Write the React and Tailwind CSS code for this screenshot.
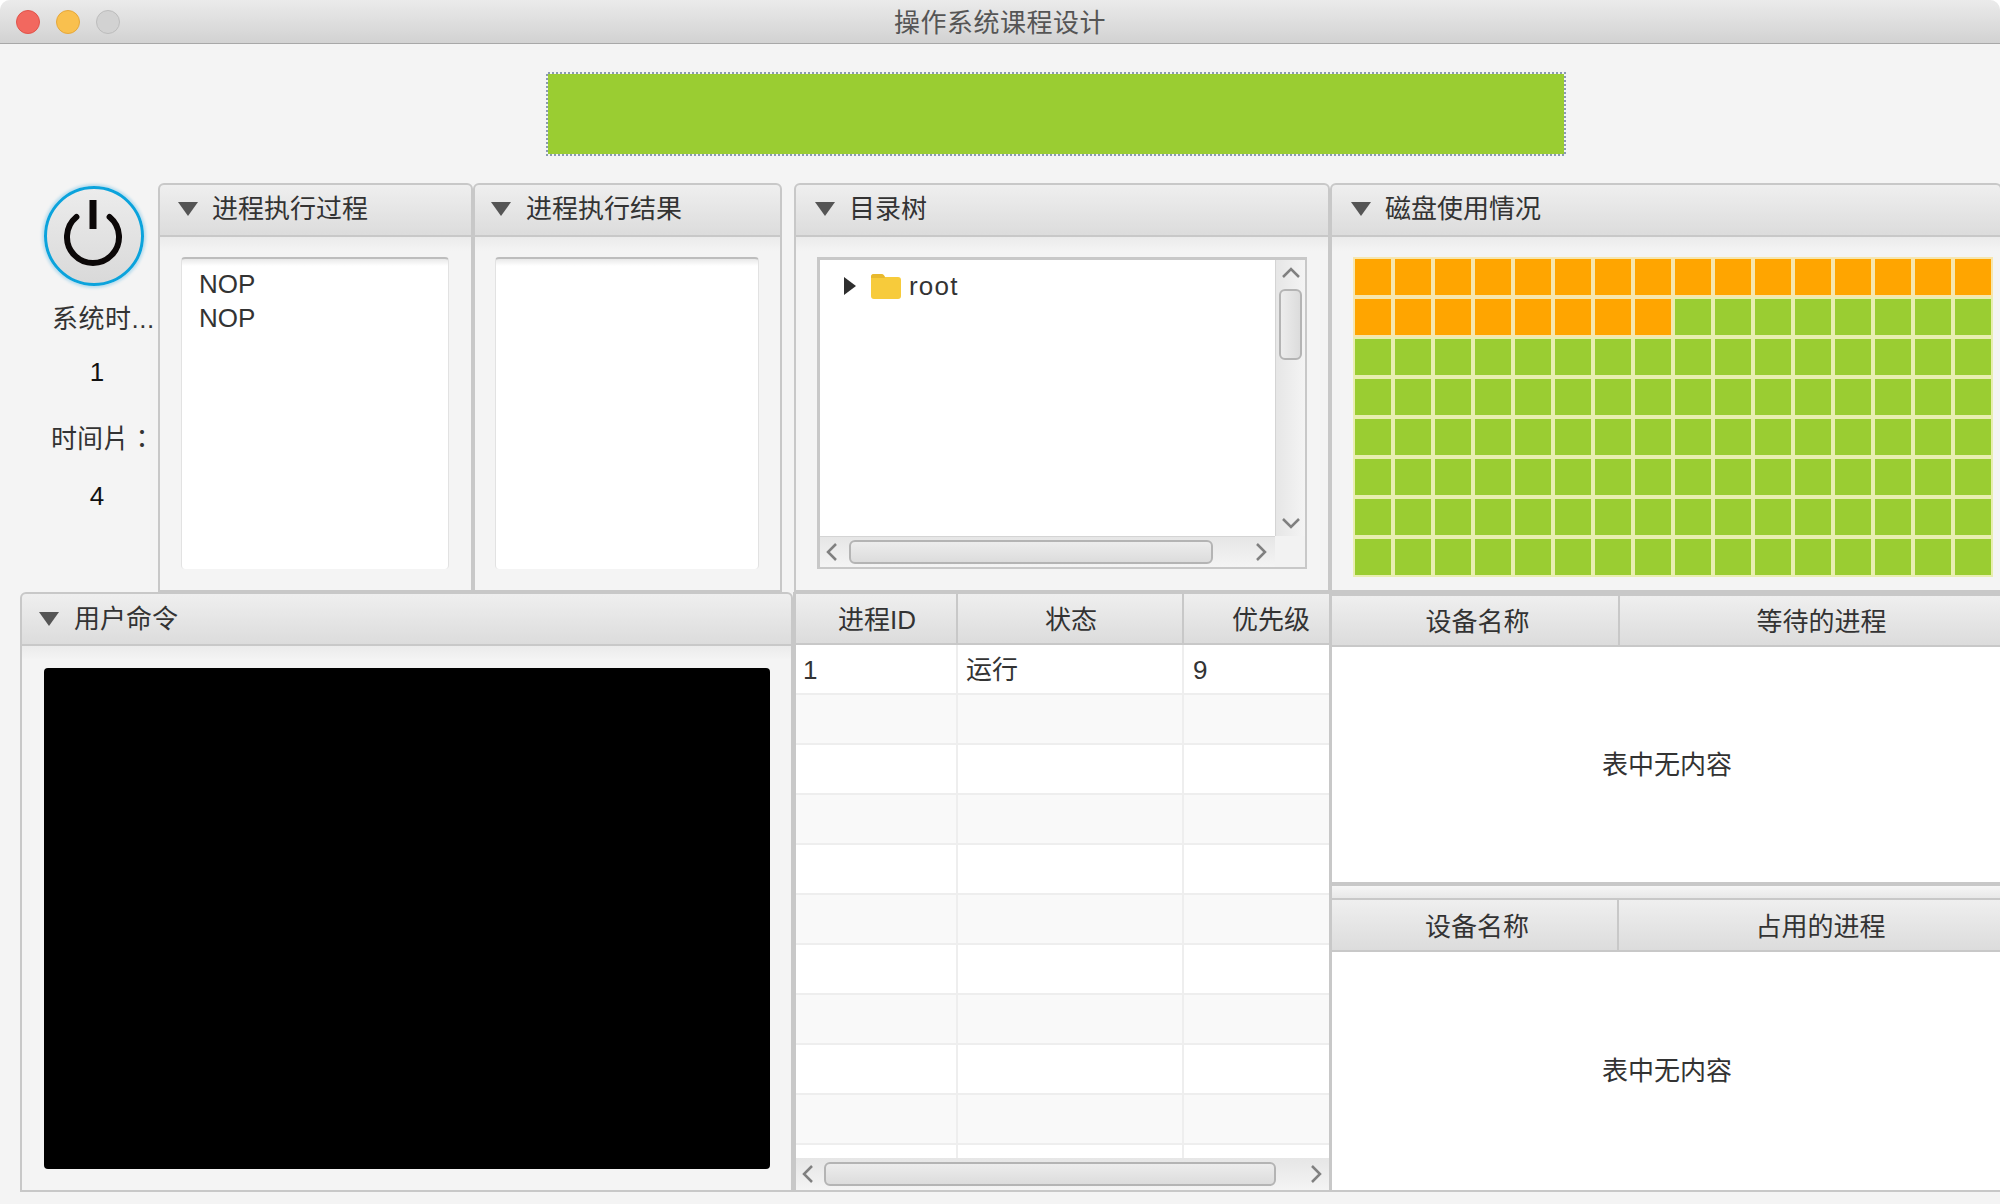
import React from "react";

const headerBg = "bg-linear-to-b from-[#efefef] to-[#dcdcdc]";
const lineColor = "border-[#c8c8c8]";

const PaneTriangle = () => (
  <svg width="20" height="16" viewBox="0 0 20 16" className="shrink-0">
    <path d="M0 1 H20 L10 15 Z" fill="#555555" />
  </svg>
);

const TitledPane = ({ title, className, headerPad = "pl-[16px] gap-[15px] pb-[2px]", children }) => (
  <div className={`flex flex-col shrink-0 ${className}`}>
    <div className={`h-[54px] shrink-0 flex items-center border-2 rounded-t-[6px] ${lineColor} ${headerBg} ${headerPad}`}>
      <PaneTriangle />
      <span className="text-[26px] leading-none text-[#333333] whitespace-nowrap">{title}</span>
    </div>
    <div className={`flex-1 min-h-0 flex border-x-2 border-b-2 ${lineColor} bg-[linear-gradient(#ebebeb,#f4f4f4_14px)] pt-[20px] pb-[21px] px-[21px]`}>
      {children}
    </div>
  </div>
);

const ListBox = ({ items = [], className = "" }) => (
  <div className={`flex-1 rounded-[4px] border-x border-[#e2e2e2] border-t-2 border-t-[#bdbdbd] bg-[linear-gradient(#e9e9e9,#ffffff_7px)] pt-[8px] pl-[17px] ${className}`}>
    {items.map((item, i) => (
      <div key={i} className="h-[34px] flex items-center text-[26px] text-[#333333]">{item}</div>
    ))}
  </div>
);

const Chevron = ({ dir }) => {
  const paths = {
    up: "M2 11 L10 3 L18 11",
    down: "M2 3 L10 11 L18 3",
    left: "M11 2 L3 10 L11 18",
    right: "M3 2 L11 10 L3 18",
  };
  const vertical = dir === "up" || dir === "down";
  return (
    <svg width={vertical ? 20 : 14} height={vertical ? 14 : 20} viewBox={vertical ? "0 0 20 14" : "0 0 14 20"} className="shrink-0">
      <path d={paths[dir]} fill="none" stroke="#808080" strokeWidth="2.5" />
    </svg>
  );
};

const HScrollBar = ({ trackPad, thumbClass }) => (
  <div className={`h-full flex items-center bg-linear-to-b from-[#e6e6e6] to-[#f4f4f4] ${trackPad}`}>
    <Chevron dir="left" />
    <div className={`h-[24px] rounded-[6px] border-2 border-[#b4b4b4] bg-linear-to-b from-[#ededed] to-[#dcdcdc] ${thumbClass}`} />
    <div className="flex-1" />
    <Chevron dir="right" />
  </div>
);

const TreeView = () => (
  <div className={`flex-1 flex flex-col border-t-[3px] border-l-[3px] border-r-2 border-b-2 ${lineColor} bg-[#f2f2f2]`}>
    <div className="flex-1 min-h-0 flex">
      <div className="flex-1 bg-white pt-[13px] pl-[24px]">
        <div className="flex items-center h-[26px]">
          <svg width="12" height="18" viewBox="0 0 12 18"><path d="M0 0 L12 9 L0 18 Z" fill="#2e2e2e" /></svg>
          <svg width="30" height="25" viewBox="0 0 30 25" className="ml-[15px]">
            <path d="M0 3 Q0 0 3 0 H10 Q13 0 14 3 H27 Q30 3 30 6 V22 Q30 25 27 25 H3 Q0 25 0 22 Z" fill="#f7cb3b" />
            <path d="M0 3 Q0 0 3 0 H10 Q13 0 14 4 H0 Z" fill="#e8b92e" />
          </svg>
          <span className="ml-[8px] text-[26px] tracking-[1.2px] text-[#333333]">root</span>
        </div>
      </div>
      <div className="w-[30px] flex flex-col items-center bg-linear-to-r from-[#e6e6e6] to-[#f4f4f4] border-l border-[#d4d4d4] pt-[6px] pb-[6px]">
        <Chevron dir="up" />
        <div className="mt-[9px] w-[23px] h-[71px] rounded-[6px] border-2 border-[#b4b4b4] bg-linear-to-r from-[#ededed] to-[#dcdcdc]" />
        <div className="flex-1" />
        <Chevron dir="down" />
      </div>
    </div>
    <div className="h-[31px] shrink-0 flex">
      <div className="flex-1 border-t border-[#d4d4d4]">
        <HScrollBar trackPad="pl-[5px] pr-[7px]" thumbClass="ml-[10px] w-[364px]" />
      </div>
      <div className="w-[30px] bg-[#f2f2f2]" />
    </div>
  </div>
);

const DiskGrid = () => {
  const cells = Array.from({ length: 128 }, (_, i) => i < 24);
  return (
    <div className="grid grid-cols-[repeat(16,40px)] grid-rows-[repeat(8,40px)]">
      {cells.map((used, i) => (
        <div
          key={i}
          className={used ? "border-2 border-[#f6e6ae] bg-[#ffa500]" : "border-2 border-[#e8eeb0] bg-[#9acd32]"}
        />
      ))}
    </div>
  );
};

const HeaderCell = ({ className, children }) => (
  <div className={`h-full shrink-0 flex items-center justify-center border-r-2 ${lineColor} ${headerBg} text-[26px] text-[#333333] whitespace-nowrap ${className}`}>
    {children}
  </div>
);

const ProcessTable = () => {
  const rows = Array.from({ length: 11 }, (_, i) => i);
  return (
    <div className={`w-[539px] shrink-0 flex flex-col border-x-[3px] border-b-2 ${lineColor} bg-white overflow-hidden`}>
      <div className={`h-[53px] shrink-0 flex border-t-2 border-b-2 ${lineColor}`}>
        <HeaderCell className="w-[162px] pl-[2px] pt-[4px]">进程ID</HeaderCell>
        <HeaderCell className="w-[226px] pl-[2px] pt-[4px]">状态</HeaderCell>
        <HeaderCell className="w-[174px] pl-[2px] pt-[4px] border-r-0">优先级</HeaderCell>
      </div>
      <div className="flex-1 min-h-0 overflow-hidden">
        {rows.map((i) => (
          <div key={i} className={`h-[50px] flex border-b-2 border-[#eeeeee] text-[26px] text-[#333333] ${i % 2 === 1 ? "bg-[#f9f9f9]" : "bg-white"}`}>
            <div className="w-[162px] shrink-0 flex items-center pl-[7px] pt-[2px] border-r-2 border-[#eeeeee]">{i === 0 ? "1" : ""}</div>
            <div className="w-[226px] shrink-0 flex items-center pl-[8px] pt-[2px] border-r-2 border-[#eeeeee]">{i === 0 ? "运行" : ""}</div>
            <div className="flex-1 flex items-center pl-[9px] pt-[2px]">{i === 0 ? "9" : ""}</div>
          </div>
        ))}
      </div>
      <div className="h-[32px] shrink-0">
        <HScrollBar trackPad="pl-[5px] pr-[6px]" thumbClass="ml-[9px] w-[452px]" />
      </div>
    </div>
  );
};

const DeviceTable = ({ headerClass, firstWidth, col2, grow }) => (
  <div className={`flex flex-col ${grow}`}>
    <div className={`flex shrink-0 ${headerClass} ${lineColor}`}>
      <HeaderCell className={`${firstWidth} pl-[5px] pt-[4px]`}>设备名称</HeaderCell>
      <HeaderCell className="w-[400px] pl-[5px] pt-[4px] border-r-0">{col2}</HeaderCell>
    </div>
    <div className="flex-1 flex items-center justify-center pl-[2px] pt-[1px] bg-white text-[26px] text-[#333333]">表中无内容</div>
  </div>
);

const PowerButton = () => (
  <div className="w-[100px] h-[100px] rounded-full border-[3px] border-[#0ba3dc] shadow-[0_0_3px_2px_#b8dced] bg-linear-to-b from-[#ececec] to-[#d9d9d9] flex items-center justify-center">
    <svg width="60" height="68" viewBox="0 0 60 68" className="mb-[4px]">
      <path d="M12.4 17 A26 26 0 1 0 45.6 17" fill="none" stroke="#0c0808" strokeWidth="6" strokeLinecap="round" />
      <rect x="25.5" y="0" width="7" height="29" fill="#0c0808" />
    </svg>
  </div>
);

export default function App() {
  return (
    <div className="w-[2000px] h-[1204px] flex flex-col overflow-hidden bg-[#f4f4f4] rounded-t-[10px] font-['Liberation_Sans','Noto_Sans_CJK_SC',sans-serif]">
      {/* Title bar */}
      <div className="h-[44px] shrink-0 relative flex items-center justify-center bg-linear-to-b from-[#ebebeb] to-[#d2d2d2] border-b border-[#a8a8a8]">
        <div className="absolute left-[16px] top-[10px] flex gap-[16px]">
          <div className="w-[24px] h-[24px] rounded-full bg-[#f2685f] border border-[#e0534a]" />
          <div className="w-[24px] h-[24px] rounded-full bg-[#f9c04e] border border-[#e5a73b]" />
          <div className="w-[24px] h-[24px] rounded-full bg-[#d2d2d2] border border-[#bcbcbc]" />
        </div>
        <span className="pt-[2px] text-[26px] leading-none tracking-[0.5px] text-[#555555]">操作系统课程设计</span>
      </div>

      {/* Banner */}
      <div className="h-[139px] shrink-0 pt-[28px] pl-[546px]">
        <div className="w-[1020px] h-[84px] p-[2px] bg-[conic-gradient(#8a9ab0_25%,#f4f4f4_0_50%,#8a9ab0_0_75%,#f4f4f4_0)] bg-[length:4px_4px]">
          <div className="w-full h-full bg-[#9acd32]" />
        </div>
      </div>

      {/* Top row */}
      <div className="h-[409px] shrink-0 flex">
        <div className="w-[158px] shrink-0 pl-[44px] pt-[3px] flex flex-col text-[26px] leading-[30px] text-[#333333]">
          <PowerButton />
          <div className="mt-[18px] ml-[8px] whitespace-nowrap tracking-[0.5px]">系统时...</div>
          <div className="mt-[23px] ml-[1px] w-[104px] text-center text-[#111111]">1</div>
          <div className="mt-[37px] ml-[7px] whitespace-nowrap font-['Liberation_Sans','Noto_Sans_CJK_TC',sans-serif]">时间片：</div>
          <div className="mt-[27px] ml-[1px] w-[104px] text-center text-[#111111]">4</div>
        </div>
        <TitledPane title="进程执行过程" className="w-[315px]" headerPad="pl-[18px] gap-[14px] pb-[2px]">
          <ListBox items={["NOP", "NOP"]} className="mr-[1px]" />
        </TitledPane>
        <TitledPane title="进程执行结果" className="w-[309px] mr-[12px]">
          <ListBox className="ml-[-1px]" />
        </TitledPane>
        <TitledPane title="目录树" className="w-[536px]" headerPad="pl-[19px] gap-[14px] pb-[2px]">
          <TreeView />
        </TitledPane>
        <TitledPane title="磁盘使用情况" className="w-[672px]" headerPad="pl-[19px] gap-[14px] pb-[2px]">
          <DiskGrid />
        </TitledPane>
      </div>

      {/* Bottom row */}
      <div className="h-[600px] shrink-0 flex pl-[20px]">
        <TitledPane title="用户命令" className="w-[773px]" headerPad="pl-[17px] gap-[15px]">
          <div className="flex-1 pt-[2px] pl-[1px]">
            <div className="w-full h-full bg-black rounded-[4px]" />
          </div>
        </TitledPane>
        <ProcessTable />
        <div className={`flex-1 min-w-0 flex flex-col overflow-hidden border-b-2 ${lineColor} bg-white`}>
          <DeviceTable
            headerClass="h-[55px] border-t-4 border-b-2"
            firstWidth="w-[288px]"
            col2="等待的进程"
            grow="h-[290px]"
          />
          <div className={`h-[18px] shrink-0 border-t-4 border-b-2 ${lineColor} bg-linear-to-b from-[#f6f6f6] to-[#e8e8e8]`} />
          <DeviceTable
            headerClass="h-[52px] border-b-2"
            firstWidth="w-[287px]"
            col2="占用的进程"
            grow="flex-1 min-h-0"
          />
        </div>
      </div>
    </div>
  );
}
